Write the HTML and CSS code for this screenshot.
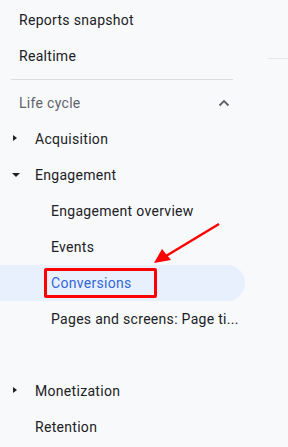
FILE: index.html
```html
<!DOCTYPE html>
<html lang="en">
<head>
  <meta charset="UTF-8">
  <meta name="viewport" content="width=device-width, initial-scale=1.0">
  <title>Reports navigation</title>
  <link rel="stylesheet" href="styles.css">
</head>
<body>

<div class="edge-line"></div>

<nav class="side-nav">
  <div class="nav-item top">Reports snapshot</div>
  <div class="nav-item top">Realtime</div>

  <div class="divider"></div>

  <div class="nav-item section">
    <span>Life cycle</span>
    <svg class="chevron" width="12" height="8" viewBox="0 0 12 8">
      <path d="M1.5 6.5 L6 2 L10.5 6.5" fill="none" stroke="#5f6368" stroke-width="1.8"/>
    </svg>
  </div>

  <div class="nav-item group">
    <span class="caret caret-right"></span>Acquisition
  </div>
  <div class="nav-item group">
    <span class="caret caret-down"></span>Engagement
  </div>

  <div class="nav-item sub">Engagement overview</div>
  <div class="nav-item sub">Events</div>
  <div class="nav-item sub active">
    <span class="label">Conversions</span>
    <span class="mark-box"></span>
  </div>
  <div class="nav-item sub">Pages and screens: Page ti...</div>

  <div class="spacer"></div>

  <div class="nav-item group">
    <span class="caret caret-right"></span>Monetization
  </div>
  <div class="nav-item group">
    <span class="caret caret-none"></span>Retention
  </div>
</nav>

<!-- flecha de anotação -->
<svg class="arrow" width="70" height="45" viewBox="0 0 70 45">
  <line x1="67" y1="2" x2="14" y2="34" stroke="#f00" stroke-width="2.5"/>
  <polygon points="2,41 10,27 19,38" fill="#f00"/>
</svg>

</body>
</html>
```

FILE: styles.css
```css
body {
  font-family: Roboto, "Noto Sans", Arial, sans-serif;
  background-color: #f8f9fb;
  margin: 0;
  padding: 2px 0 0 0;
  color: #202124;
  position: relative;
  overflow: hidden;
}

.side-nav {
  width: 245px;
  font-size: 14px;
  letter-spacing: 0.3px;
}

.nav-item {
  height: 36px;
  display: flex;
  align-items: center;
  white-space: nowrap;
  box-sizing: border-box;
}

.top {
  padding-left: 19px;
}

.divider {
  height: 1px;
  background-color: #dadce0;
  margin: 5px 12px 5px 11px;
  width: 222px;
}

.section {
  padding-left: 19px;
  padding-right: 15px;
  justify-content: space-between;
  width: 245px;
  color: #5f6368;
}

.group {
  padding-left: 12px;
}

.caret {
  width: 23px;
  height: 8px;
  position: relative;
}

.caret-right::before {
  content: "";
  position: absolute;
  left: 1px;
  top: 0;
  border-top: 3.5px solid transparent;
  border-bottom: 3.5px solid transparent;
  border-left: 4.5px solid #202124;
}

.caret-down::before {
  content: "";
  position: absolute;
  left: 0;
  top: 2px;
  border-left: 4px solid transparent;
  border-right: 4px solid transparent;
  border-top: 4px solid #202124;
}

.sub {
  padding-left: 51px;
}

.spacer {
  height: 36px;
}

.active {
  background-color: #e8f0fe;
  border-radius: 0 18px 18px 0;
  color: #3367d6;
  position: relative;
}

.mark-box {
  position: absolute;
  left: 44px;
  top: 3px;
  width: 113px;
  height: 30px;
  border: 3px solid #f00;
  border-radius: 2px;
  box-sizing: border-box;
}

.arrow {
  position: absolute;
  left: 152px;
  top: 222px;
}

.edge-line {
  position: absolute;
  left: 268px;
  top: 58px;
  width: 20px;
  height: 1px;
  background-color: #e4e6ea;
}
```
